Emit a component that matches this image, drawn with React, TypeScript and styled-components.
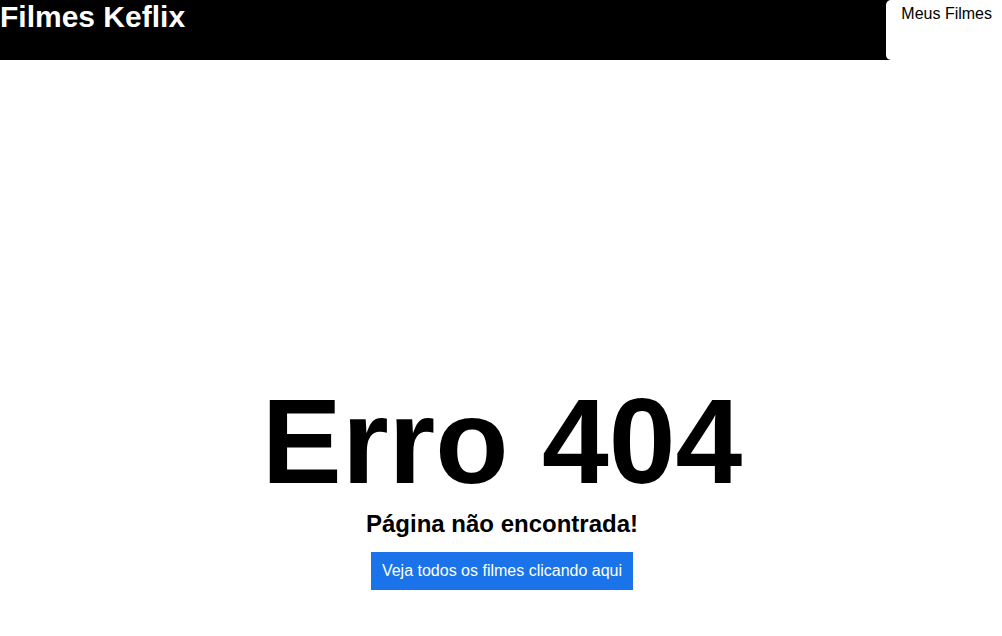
import React from "react";
import styled, { createGlobalStyle } from "styled-components";

const Global = createGlobalStyle`
  html, body { margin: 0; padding: 0; background: #fff; }
  body { font-family: "Liberation Sans", Arial, sans-serif; color: #000; }
  * { box-sizing: border-box; }
`;

const Header = styled.header`
  display: flex;
  justify-content: space-between;
  align-items: stretch;
  height: 60px;
  background: #000;
`;

const Logo = styled.h1`
  margin: 0;
  font-size: 30px;
  font-weight: bold;
  color: #fff;
  line-height: 34px;
`;

const NavLink = styled.a`
  display: block;
  background: #fff;
  color: #000;
  text-decoration: none;
  font-size: 16px;
  padding: 5px 10px 0 15px;
  border-radius: 5px 0 0 5px;
`;

const Main = styled.main`
  display: flex;
  flex-direction: column;
  align-items: center;
  padding-top: 312px;
  padding-left: 2px;
`;

const Title = styled.h1`
  margin: 0;
  font-size: 120px;
  font-weight: bold;
  line-height: 138px;
`;

const Subtitle = styled.h2`
  margin: 0 0 14px;
  font-size: 24px;
  font-weight: bold;
  line-height: 28px;
`;

const Button = styled.a`
  display: inline-block;
  background: #1a73e8;
  color: #fff;
  text-decoration: none;
  font-size: 16px;
  line-height: 18px;
  padding: 10px 11px;
`;

export default function App() {
  return (
    <>
      <Global />
      <Header>
        <Logo>Filmes Keflix</Logo>
        <NavLink href="#">Meus Filmes</NavLink>
      </Header>
      <Main>
        <Title>Erro 404</Title>
        <Subtitle>Página não encontrada!</Subtitle>
        <Button href="#">Veja todos os filmes clicando aqui</Button>
      </Main>
    </>
  );
}
